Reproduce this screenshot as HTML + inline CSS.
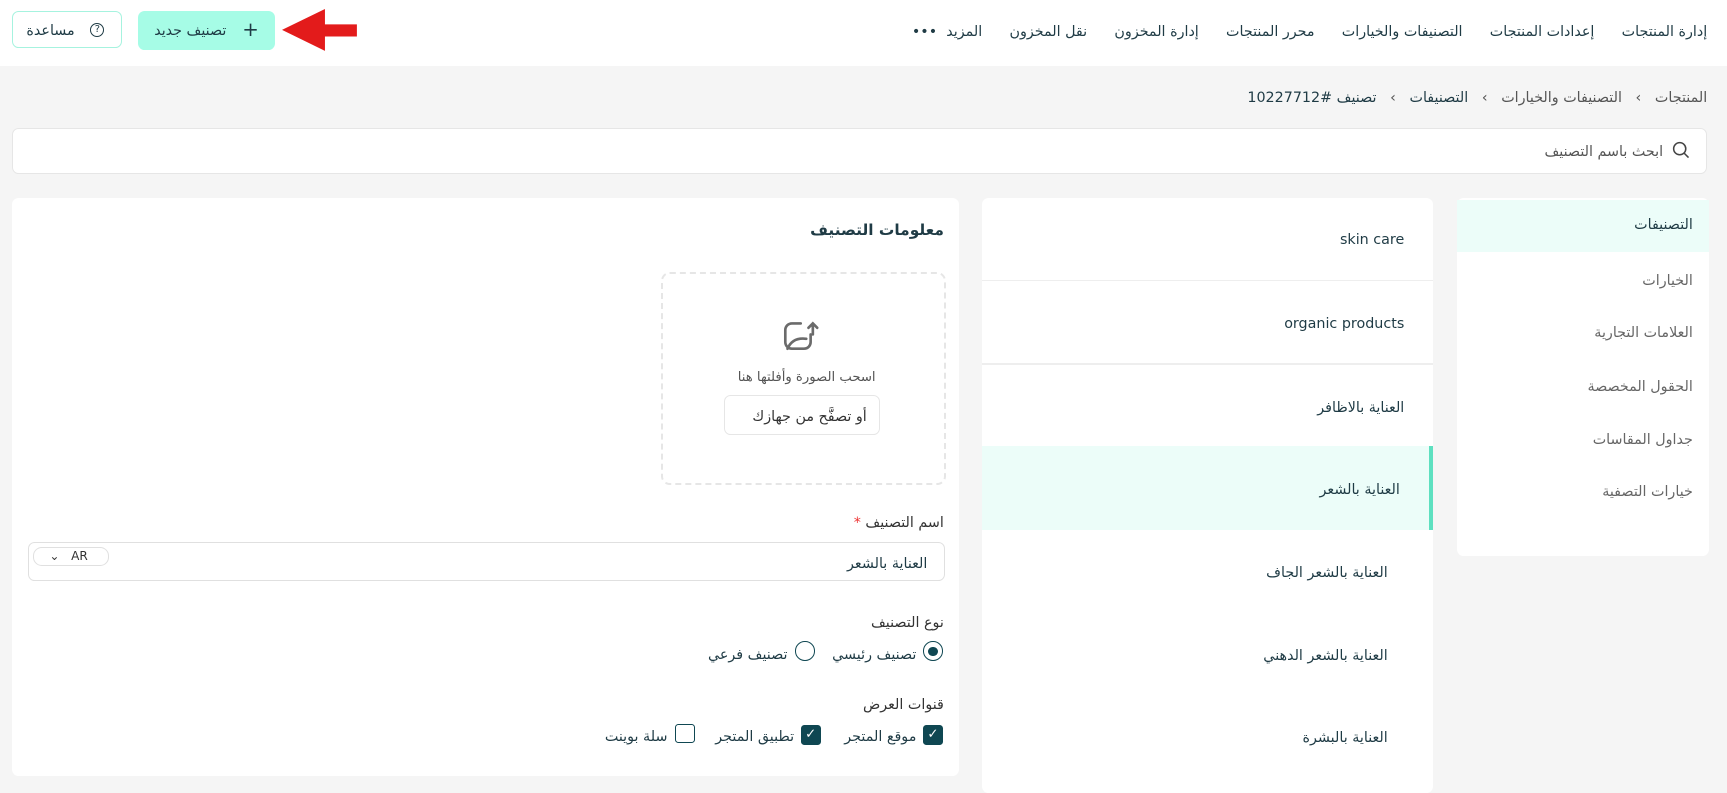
<!DOCTYPE html>
<html><head><meta charset="utf-8"><style>
html,body{margin:0;padding:0;}
body{width:1568px;height:715px;zoom:1.10140;background:#f5f5f5;font-family:"DejaVu Sans","Liberation Sans",sans-serif;color:#1f3b45;position:relative;overflow:hidden;font-size:13px;}
.a{position:absolute;}
.t{position:absolute;white-space:nowrap;direction:rtl;margin-top:3px;}
.card{position:absolute;background:#fff;border-radius:6px;}
</style></head><body>
<div class="a" style="left:0;top:0;width:1568px;height:60px;background:#fff"></div>
<div class="a" style="left:11px;top:10px;width:98px;height:32px;border:1px solid #a6f3df;border-radius:6px;background:#fff"></div>
<div class="t" style="left:24px;top:18px;font-size:13px">مساعدة</div>
<div class="a" style="left:82px;top:21px;width:11px;height:11px;border:1.3px solid #1f3b45;border-radius:50%;font-size:9px;text-align:center;line-height:11px">?</div>
<div class="a" style="left:125px;top:10px;width:125px;height:35px;background:#a6fce6;border-radius:6px"></div>
<div class="t" style="left:140px;top:18px">تصنيف جديد</div>
<div class="a" style="left:220px;top:16px;font-size:18px;color:#1f3b45">+</div>
<svg class="a" style="left:256px;top:8px" width="70" height="45"><polygon points="0,19 39,0 39,14 68,14 68,25 39,25 39,38" fill="#e31b1b"/></svg>
<div class="t" style="right:18px;top:19px;font-size:13px;word-spacing:0">إدارة المنتجات&nbsp;&nbsp;&nbsp;&nbsp;&nbsp;&nbsp;إعدادات المنتجات&nbsp;&nbsp;&nbsp;&nbsp;&nbsp;&nbsp;التصنيفات والخيارات&nbsp;&nbsp;&nbsp;&nbsp;&nbsp;&nbsp;محرر المنتجات&nbsp;&nbsp;&nbsp;&nbsp;&nbsp;&nbsp;إدارة المخزون&nbsp;&nbsp;&nbsp;&nbsp;&nbsp;&nbsp;نقل المخزون&nbsp;&nbsp;&nbsp;&nbsp;&nbsp;&nbsp;المزيد&nbsp;&nbsp;•••</div>
<div class="t" style="right:18px;top:79px;font-size:13px;color:#555">المنتجات&nbsp;&nbsp;&nbsp;›&nbsp;&nbsp;&nbsp;التصنيفات والخيارات&nbsp;&nbsp;&nbsp;›&nbsp;&nbsp;&nbsp;<span style="color:#1f3b45">التصنيفات</span>&nbsp;&nbsp;&nbsp;›&nbsp;&nbsp;&nbsp;<span style="color:#1f3b45">تصنيف #10227712</span></div>
<div class="a" style="left:11px;top:116px;width:1537px;height:40px;background:#fff;border:1px solid #e6e6e6;border-radius:6px"></div>
<svg class="a" style="left:1518px;top:128px" width="16" height="16"><circle cx="7" cy="7" r="5.5" stroke="#444" stroke-width="1.4" fill="none"/><line x1="11" y1="11" x2="15" y2="15" stroke="#444" stroke-width="1.4"/></svg>
<div class="t" style="right:58px;top:128px;color:#555">ابحث باسم التصنيف</div>
<div class="card" style="left:1323px;top:180px;width:229px;height:325px"></div>
<div class="a" style="left:1323px;top:182px;width:229px;height:47px;background:#ecfdf9"></div>
<div class="t" style="right:31px;top:194px;color:#1f3b45">التصنيفات</div>
<div class="t" style="right:31px;top:245px;color:#666">الخيارات</div>
<div class="t" style="right:31px;top:292px;color:#666">العلامات التجارية</div>
<div class="t" style="right:31px;top:341px;color:#666">الحقول المخصصة</div>
<div class="t" style="right:31px;top:389px;color:#666">جداول المقاسات</div>
<div class="t" style="right:31px;top:436px;color:#666">خيارات التصفية</div>
<div class="card" style="left:892px;top:180px;width:409px;height:540px"></div>
<div class="a" style="left:892px;top:254px;width:409px;height:1px;background:#eee"></div>
<div class="a" style="left:892px;top:330px;width:409px;height:1px;background:#eee"></div>
<div class="a" style="left:892px;top:405px;width:409px;height:76px;background:#ecfdf9"></div>
<div class="a" style="left:1297px;top:405px;width:4px;height:76px;background:#5ee0c0"></div>
<div class="t" style="right:293px;top:208px;direction:ltr">skin care</div>
<div class="t" style="right:293px;top:284px;direction:ltr">organic products</div>
<div class="t" style="right:293px;top:360px">العناية بالاظافر</div>
<div class="t" style="right:297px;top:435px">العناية بالشعر</div>
<div class="t" style="right:308px;top:510px">العناية بالشعر الجاف</div>
<div class="t" style="right:308px;top:585px">العناية بالشعر الدهني</div>
<div class="t" style="right:308px;top:660px">العناية بالبشرة</div>
<div class="card" style="left:11px;top:180px;width:860px;height:525px"></div>
<div class="t" style="right:711px;top:198px;font-size:14px;font-weight:600;color:#1f3b45">معلومات التصنيف</div>
<div class="a" style="left:600px;top:247px;width:255px;height:190px;border:2px dashed #e6e6e6;border-radius:8px"></div>
<svg class="a" style="left:710px;top:290px" width="36" height="36" fill="none" stroke="#6b6b6b" stroke-width="2.4" stroke-linecap="round"><path d="M17 4H9a6 6 0 0 0-6 6v11a6 6 0 0 0 6 6h11a6 6 0 0 0 6-6v-7"/><path d="M5 27c3-7 9-10 17-9"/><path d="M28 14V4M24 8l4-4 4 4"/></svg>
<div class="t" style="right:773px;top:333px;color:#555;font-size:12px">اسحب الصورة وأفلتها هنا</div>
<div class="a" style="left:657px;top:359px;width:140px;height:34px;border:1px solid #e6e6e6;border-radius:6px"></div>
<div class="t" style="right:781px;top:368px;color:#333">أو تصفَّح من جهازك</div>
<div class="t" style="right:711px;top:465px;color:#333">اسم التصنيف <span style="color:#e33">*</span></div>
<div class="a" style="left:25px;top:492px;width:831px;height:34px;border:1px solid #e0e0e0;border-radius:6px"></div>
<div class="a" style="left:30px;top:497px;width:67px;height:15px;border:1px solid #e0e0e0;border-radius:8px;font-size:11px;line-height:15px;color:#333">&nbsp;&nbsp;&nbsp;&nbsp;⌄&nbsp;&nbsp;&nbsp;AR</div>
<div class="t" style="right:726px;top:502px;color:#1f3b45">العناية بالشعر</div>
<div class="t" style="right:711px;top:555px;color:#333">نوع التصنيف</div>
<div class="a" style="left:838px;top:582px;width:16px;height:16px;border:1.5px solid #0f4752;border-radius:50%"></div>
<div class="a" style="left:843px;top:587px;width:9px;height:9px;background:#0f4752;border-radius:50%"></div>
<div class="t" style="right:736px;top:584px;color:#1f3b45">تصنيف رئيسي</div>
<div class="a" style="left:722px;top:582px;width:16px;height:16px;border:1.5px solid #0f4752;border-radius:50%"></div>
<div class="t" style="right:853px;top:584px;color:#1f3b45">تصنيف فرعي</div>
<div class="t" style="right:711px;top:630px;color:#333">قنوات العرض</div>
<div class="a" style="left:838px;top:658px;width:18px;height:18px;background:#0f4752;border-radius:3px;color:#fff;font-size:12px;text-align:center;line-height:18px">✓</div>
<div class="t" style="right:736px;top:659px">موقع المتجر</div>
<div class="a" style="left:727px;top:658px;width:18px;height:18px;background:#0f4752;border-radius:3px;color:#fff;font-size:12px;text-align:center;line-height:18px">✓</div>
<div class="t" style="right:847px;top:659px">تطبيق المتجر</div>
<div class="a" style="left:613px;top:657px;width:16px;height:16px;border:1.5px solid #0f4752;border-radius:3px"></div>
<div class="t" style="right:962px;top:659px">سلة بوينت</div>
</body></html>
